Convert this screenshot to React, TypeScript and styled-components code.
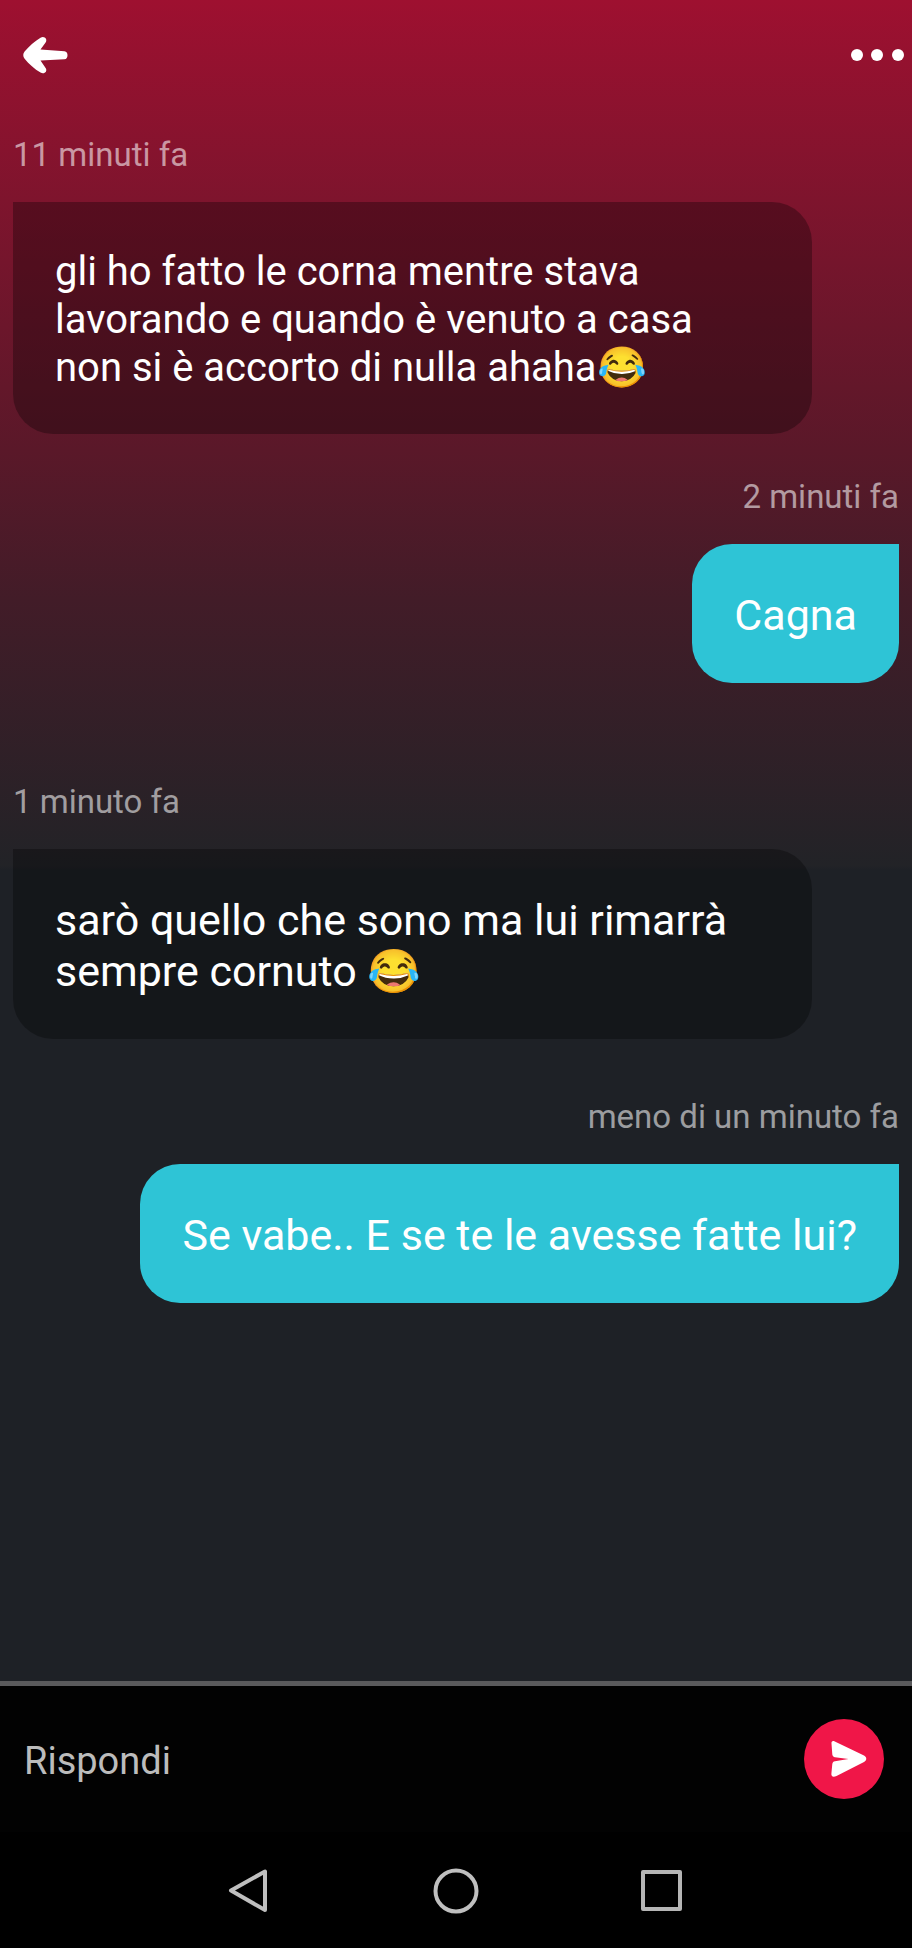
import React from "react";
import styled, { createGlobalStyle } from "styled-components";

const GlobalStyle = createGlobalStyle`
  *, *::before, *::after { box-sizing: border-box; }
  body {
    margin: 0;
    background: #1e2126;
    font-family: Roboto, "Noto Sans", sans-serif;
    color: #fff;
  }
  button { border: 0; padding: 0; background: none; color: inherit; cursor: pointer; }
`;

const Screen = styled.div`
  display: flex;
  flex-direction: column;
  min-height: 100vh;
  background: #1e2126 linear-gradient(#9e1030 0, #7e142d 200px, #5a1829 450px, #421c28 600px, #222327 866px, #1e2126 870px) no-repeat;
`;

const Header = styled.header`
  display: flex;
  align-items: center;
  justify-content: space-between;
  height: 110px;
  padding: 0 8px 0 22px;
`;

const IconButton = styled.button`
  display: grid;
  place-items: center;
  height: 48px;
`;

const Thread = styled.main`
  flex: 1;
  display: flex;
  flex-direction: column;
  padding: 25px 13px 40px;
`;

const spaces = { small: 43, medium: 58, large: 99 };

const Message = styled.article<{ $mine?: boolean; $space?: keyof typeof spaces }>`
  display: flex;
  flex-direction: column;
  align-items: ${(p) => (p.$mine ? "flex-end" : "flex-start")};
  gap: 27px;
  margin-bottom: ${(p) => spaces[p.$space ?? "small"]}px;
`;

const Time = styled.time`
  font-size: 33px;
  line-height: 40px;
  color: rgba(255, 255, 255, 0.56);
`;

const Bubble = styled.p<{ $mine?: boolean; $compact?: boolean }>`
  margin: 0;
  max-width: calc(100% - 87px);
  padding: ${(p) => (p.$compact ? "46px 50px 42px 42px" : "46px 42px 42px")};
  border-radius: ${(p) => (p.$mine ? "40px 0 40px 40px" : "0 40px 40px 40px")};
  background: ${(p) => (p.$mine ? "#2ec4d6" : "rgba(0, 0, 0, 0.3)")};
  font-size: ${(p) => (p.$compact ? 40 : 43)}px;
  line-height: ${(p) => (p.$compact ? 48 : 51)}px;
`;

const Composer = styled.form`
  display: flex;
  align-items: center;
  height: 151px;
  padding: 0 28px 0 24px;
  border-top: 5px solid #5a5a5c;
  background: #020202;
`;

const ReplyInput = styled.input`
  flex: 1;
  min-width: 0;
  padding: 4px 0 0;
  border: 0;
  outline: 0;
  background: transparent;
  color: #fff;
  font: 38px/48px Roboto, "Noto Sans", sans-serif;
  &::placeholder { color: #bcbcbc; opacity: 1; }
`;

const SendButton = styled.button`
  flex: none;
  display: grid;
  place-items: center;
  width: 80px;
  height: 80px;
  border-radius: 50%;
  && { background: #f01648; }
`;

const NavBar = styled.nav`
  display: flex;
  align-items: center;
  justify-content: center;
  gap: 158px;
  height: 116px;
  padding-top: 4px;
  background: #000;
`;

export default function App() {
  return (
    <>
      <GlobalStyle />
      <Screen>
        <Header>
          <IconButton aria-label="Indietro">
            <svg width="48" height="40" viewBox="0 0 48 40" fill="#fff">
              <path d="M18.500 2.800C22 .3 26 4 23.600 7.400L18.500 14.600L42.500 16.200C46.500 16.500 46.500 24 42.500 24.300L18.500 25.600L23.600 33C26 36.500 22 39.800 18.500 37.500C12.500 34 7 29 2.600 23.700C.8 21.500 .8 18.700 2.600 16.500C7 11.300 12.500 6.500 18.500 2.800Z" />
            </svg>
          </IconButton>
          <IconButton aria-label="Altro">
            <svg width="54" height="14" viewBox="0 0 54 14" fill="#fff">
              <circle cx="7" cy="7" r="6" />
              <circle cx="27" cy="7" r="6" />
              <circle cx="48" cy="7" r="6" />
            </svg>
          </IconButton>
        </Header>
        <Thread>
          <Message>
            <Time>11 minuti fa</Time>
            <Bubble $compact>
              gli ho fatto le corna mentre stava lavorando e quando è venuto a casa non si è accorto di nulla ahaha😂
            </Bubble>
          </Message>
          <Message $mine $space="large">
            <Time>2 minuti fa</Time>
            <Bubble $mine>Cagna</Bubble>
          </Message>
          <Message $space="medium">
            <Time>1 minuto fa</Time>
            <Bubble>sarò quello che sono ma lui rimarrà sempre cornuto 😂</Bubble>
          </Message>
          <Message $mine>
            <Time>meno di un minuto fa</Time>
            <Bubble $mine>Se vabe.. E se te le avesse fatte lui?</Bubble>
          </Message>
        </Thread>
        <Composer onSubmit={(e) => e.preventDefault()}>
          <ReplyInput aria-label="Rispondi" placeholder="Rispondi" />
          <SendButton type="submit" aria-label="Invia">
            <svg width="48" height="40" viewBox="-4 0 48 40" fill="#fff">
              <path d="M7.500 4.500C7.200 2.500 8.500 1.500 10.300 2.200L40 16.500C43 18.200 43 21.300 40 23L12.500 37C9 38.500 7 37.500 7.400 34.500L8.300 25C8.500 23.300 9.500 22.500 11 22.200L24.500 20L11 18.300C9.500 18 8.500 17 8.300 15.500Z" />
            </svg>
          </SendButton>
        </Composer>
        <NavBar>
          <button aria-label="Indietro">
            <svg width="48" height="48" viewBox="0 0 48 48" fill="none" stroke="#bfbfbf" strokeWidth="4" strokeLinejoin="round">
              <path d="M39 4.500V43L5 23.500Z" />
            </svg>
          </button>
          <button aria-label="Home">
            <svg width="48" height="48" viewBox="0 0 48 48" fill="none" stroke="#bfbfbf" strokeWidth="4">
              <circle cx="24" cy="24" r="20.500" />
            </svg>
          </button>
          <button aria-label="Recenti">
            <svg width="48" height="48" viewBox="0 0 48 48" fill="none" stroke="#b5b5b5" strokeWidth="4" strokeLinejoin="round">
              <rect x="5" y="5" width="37" height="37" />
            </svg>
          </button>
        </NavBar>
      </Screen>
    </>
  );
}
